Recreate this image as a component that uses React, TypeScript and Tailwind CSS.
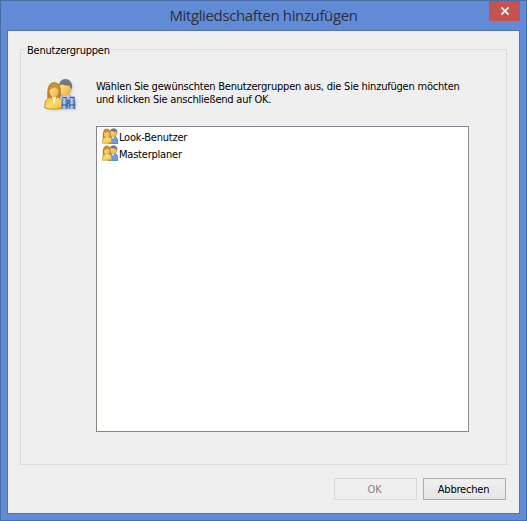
import React from "react";

const uiFont = "font-['DejaVu_Sans_Condensed','DejaVu_Sans',sans-serif] [font-stretch:condensed] text-[11px] leading-[13px] tracking-[-0.215px] whitespace-nowrap";

function Woman() {
  return (
    <g transform="translate(.2 2.2) scale(.9 .93)">
      <path d="M4 19C3 7 6 2.500 11 2.500s8 4.500 7 15.500l-4 2H7.500z" fill="#bd8527" stroke="#a4772c" strokeWidth=".6" />
      <path d="M.7 29.500c-.4-7 1.600-9.500 6.300-11.500l3.700 5 4-5c4.300 2 6.500 4.500 6 11.500-5 2.200-15 2.200-20 0z" fill="url(#coat)" stroke="#b98a1e" strokeWidth=".9" />
      <path d="M8.500 18l2.500 8 2.500-8z" fill="#fffdf2" />
      <path d="M6 11c0-3.600 2-5 5-5s5 1.400 5 5-1.800 7.800-5 7.800S6 14.500 6 11z" fill="url(#face)" />
      <path d="M5.700 10.500c0-5 2.300-7 5.300-7s5.600 2 5.300 7C15 9.500 13.200 8.500 11.500 7.500 9.800 8.500 7.300 9.500 5.700 10.500z" fill="#cc9331" />
    </g>
  );
}

function Man() {
  return (
    <g transform="translate(0 .8) scale(1 .98)">
      <path d="M13 29c-.3-7 1.300-11 5.500-12.500h6.500C29.200 18 30.600 21 30.500 29z" fill="url(#shirt)" stroke="#6d93cf" strokeWidth=".7" />
      <path d="M18.500 16l3 5.500 3.500-5.500z" fill="#fff" />
      <path d="M15.800 9.500c0-5 2.400-7 5.700-7s5.700 2.200 5.400 7c-.2 4.600-2.300 8-5.400 8s-5.700-3.500-5.700-8z" fill="url(#face)" stroke="#c99842" strokeWidth=".5" />
      <path d="M15.500 6.500C16 2.500 18 .8 21.500.8s6.900 2.700 5.900 9.200L25.800 6.500c-3 0-5.900-.4-7.900-1.300z" fill="#75787c" stroke="#606367" strokeWidth=".7" />
    </g>
  );
}

function Paints() {
  return (
    <defs>
      <linearGradient id="coat" x1="0" y1="0" x2="1" y2="1"><stop stopColor="#f1c03c" /><stop offset=".5" stopColor="#ffdb68" /><stop offset="1" stopColor="#e8b233" /></linearGradient>
      <linearGradient id="face" x1="0" y1="0" x2="1" y2="1"><stop stopColor="#ffe9b0" /><stop offset=".5" stopColor="#fccb62" /><stop offset="1" stopColor="#eaa63a" /></linearGradient>
      <linearGradient id="shirt" x1="0" y1="0" x2="1" y2="1"><stop stopColor="#c9dffb" /><stop offset="1" stopColor="#5f92dd" /></linearGradient>
      <linearGradient id="tube"><stop stopColor="#3e66a6" /><stop offset=".4" stopColor="#bcd3f2" /><stop offset="1" stopColor="#355b99" /></linearGradient>
    </defs>
  );
}

function GroupSearchIcon() {
  return (
    <svg className="h-8 w-8 shrink-0 overflow-visible drop-shadow-[1px_1px_1px_rgba(0,0,0,0.15)]" viewBox="0 0 32 32">
      <Paints />
      <Man />
      <Woman />
      <path d="M22 22h5v4h-5z" fill="#5479b3" />
      <path d="M18.600 18.500h4.200l.8 5.500v7h-6v-7z" fill="url(#tube)" />
      <path d="M26.200 18.500h4.200l.8 5.500v7h-6v-7z" fill="url(#tube)" />
      <path d="M18.700 19.500h4M26.300 19.500h4M17.600 27h6M25.200 27h6" stroke="#31558e" strokeWidth="1" />
    </svg>
  );
}

function GroupIcon() {
  return (
    <svg className="h-4 w-4 shrink-0" viewBox="0 0 32 32">
      <path d="M13 31c0-8 1-12.500 5.500-14.500h7c4.500 1.500 6 5.500 6 14.500z" fill="#6c9ce4" stroke="#3f70bd" strokeWidth="1.500" />
      <path d="M19 16l3 6 4-6z" fill="#fff" />
      <ellipse cx="23" cy="9.500" rx="7" ry="8" fill="url(#face)" stroke="#bd8a36" />
      <path d="M16 8C16 3 19 .8 23.500.8S31.500 4 30.500 11L28 7.500c-4 0-7-.5-9-1.500z" fill="#74777c" />
      <path d="M1.500 20C1 6 4 1.500 9.500 1.500S18 6 17.500 20z" fill="#b97a1f" />
      <path d="M.7 30.500c-.4-8 1.500-11 5.800-13l3.500 5 4-5c4.500 2 6 5 6 13z" fill="url(#coat)" stroke="#b7871b" strokeWidth="1.200" />
      <path d="M7.500 18l2.500 7 3-7z" fill="#fffdf2" />
      <ellipse cx="10" cy="12" rx="5.800" ry="7.500" fill="url(#face)" />
      <path d="M4 11c0-5 2-8 6-8s6 3 6 8c-2-1-4-2-5.500-4C9 9 7 10 4 11z" fill="#c98e2e" />
    </svg>
  );
}

export default function App() {
  return (
    <div className="flex h-[521px] w-[527px] flex-col border border-[#496da5] bg-[#618bd5] px-1.5 pb-1.5">
      <header className="flex h-[29px] shrink-0">
        <div className="w-[31px]" />
        <h1 className="flex-1 pt-[3px] text-center font-['Open_Sans','Noto_Sans',sans-serif] text-[15px] leading-[22px] tracking-[-0.37px] whitespace-nowrap text-[#2b303a]">Mitgliedschaften hinzufügen</h1>
        <button aria-label="Schließen" className="flex h-5 w-[31px] items-center justify-center bg-[#c75050]">
          <svg className="h-2 w-2" viewBox="0 0 8 8"><path d="M.5.5l7 7m0-7l-7 7" stroke="#fff" strokeWidth="1.700" /></svg>
        </button>
      </header>
      <main className="flex min-h-0 flex-1 flex-col border border-[#5075b7] bg-[#efefef] px-3 pt-3">
        <section className="flex h-[422px] w-[487px] shrink-0 flex-col">
          <div className="flex h-[13px] shrink-0">
            <span className="mt-1.5 w-[5px] border-t border-l border-[#dcdcdc]" />
            <span className={uiFont + " w-[86px] pt-px pl-0.5 text-black"}>Benutzergruppen</span>
            <span className="mt-1.5 flex-1 border-t border-r border-[#dcdcdc]" />
          </div>
          <div className="flex flex-1 border-x border-b border-[#dcdcdc] pt-[22px] pl-[23px]">
            <GroupSearchIcon />
            <div className="ml-5 flex flex-col">
              <p className={uiFont + " mt-0.5 text-black"}>
                Wählen Sie gewünschten Benutzergruppen aus, die Sie hinzufügen möchten<br />
                und klicken Sie anschließend auf OK.
              </p>
              <ul className="mt-5 h-[306px] w-[373px] border border-[#828790] bg-white pt-px pl-[5px]">
                <li className="flex h-[17px]"><GroupIcon /><span className={uiFont + " ml-px pt-[3px] text-black"}>Look-Benutzer</span></li>
                <li className="flex h-[17px]"><GroupIcon /><span className={uiFont + " ml-px pt-[3px] text-black"}>Masterplaner</span></li>
              </ul>
            </div>
          </div>
        </section>
        <footer className="mt-[13px] flex justify-end gap-1.5">
          <button disabled className="flex h-[22px] w-[83px] items-start justify-center border border-[#d9d9d9] bg-[#efefef] pt-1 pr-0.5"><span className={uiFont + " text-[#838383]"}>OK</span></button>
          <button className="mr-px flex h-[22px] w-[83px] items-start justify-center border border-[#acacac] bg-linear-to-b from-[#f0f0f0] to-[#e5e5e5] pt-1 pr-0.5"><span className={uiFont + " text-black"}>Abbrechen</span></button>
        </footer>
      </main>
    </div>
  );
}
